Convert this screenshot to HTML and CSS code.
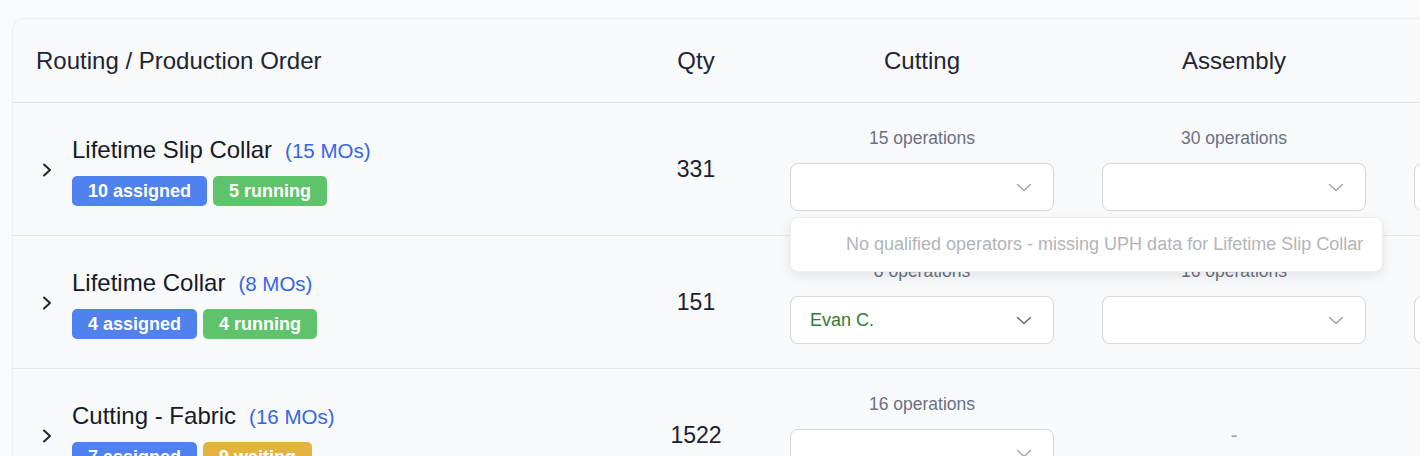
FILE: index.html
```html
<!DOCTYPE html>
<html lang="en">
<head>
<meta charset="utf-8">
<title>Routing</title>
<link rel="stylesheet" href="styles.css">
</head>
<body>
<div class="page">
  <div class="card">
    <div class="row head">
      <div class="cell first"><span class="htext">Routing / Production Order</span></div>
      <div class="cell qty">Qty</div>
      <div class="cell op">Cutting</div>
      <div class="cell op">Assembly</div>
      <div class="cell op">Sewing</div>
    </div>

    <div class="row">
      <div class="cell first">
        <svg class="chev" width="12" height="14" viewBox="0 0 12 14"><path d="M3 1.5l6 5.5-6 5.5" fill="none" stroke="#1f2430" stroke-width="2" stroke-linecap="round" stroke-linejoin="round"/></svg>
        <div class="info">
          <div class="titleline"><span class="title">Lifetime Slip Collar</span><span class="mos">(15 MOs)</span></div>
          <div class="badges"><span class="badge blue">10 assigned</span><span class="badge green">5 running</span></div>
        </div>
      </div>
      <div class="cell qty val">331</div>
      <div class="cell op">
        <div class="ops">15 operations</div>
        <div class="selwrap">
          <div class="select"><span class="selval"></span><svg class="down" width="16" height="9" viewBox="0 0 16 9"><path d="M1.5 1.5l6.5 6 6.5-6" fill="none" stroke="#a3a3a8" stroke-width="1.5" stroke-linecap="round" stroke-linejoin="round"/></svg></div>
          <div class="tip">No qualified operators - missing UPH data for Lifetime Slip Collar</div>
        </div>
      </div>
      <div class="cell op">
        <div class="ops">30 operations</div>
        <div class="select"><span class="selval"></span><svg class="down" width="16" height="9" viewBox="0 0 16 9"><path d="M1.5 1.5l6.5 6 6.5-6" fill="none" stroke="#a3a3a8" stroke-width="1.5" stroke-linecap="round" stroke-linejoin="round"/></svg></div>
      </div>
      <div class="cell op">
        <div class="ops">12 operations</div>
        <div class="select"><span class="selval"></span><svg class="down" width="16" height="9" viewBox="0 0 16 9"><path d="M1.5 1.5l6.5 6 6.5-6" fill="none" stroke="#a3a3a8" stroke-width="1.5" stroke-linecap="round" stroke-linejoin="round"/></svg></div>
      </div>
    </div>

    <div class="row">
      <div class="cell first">
        <svg class="chev" width="12" height="14" viewBox="0 0 12 14"><path d="M3 1.5l6 5.5-6 5.5" fill="none" stroke="#1f2430" stroke-width="2" stroke-linecap="round" stroke-linejoin="round"/></svg>
        <div class="info">
          <div class="titleline"><span class="title">Lifetime Collar</span><span class="mos">(8 MOs)</span></div>
          <div class="badges"><span class="badge blue">4 assigned</span><span class="badge green">4 running</span></div>
        </div>
      </div>
      <div class="cell qty val">151</div>
      <div class="cell op">
        <div class="ops">8 operations</div>
        <div class="select"><span class="selval green-text">Evan C.</span><svg class="down" width="16" height="9" viewBox="0 0 16 9"><path d="M1.5 1.5l6.5 6 6.5-6" fill="none" stroke="#6b6b70" stroke-width="1.5" stroke-linecap="round" stroke-linejoin="round"/></svg></div>
      </div>
      <div class="cell op">
        <div class="ops">16 operations</div>
        <div class="select"><span class="selval"></span><svg class="down" width="16" height="9" viewBox="0 0 16 9"><path d="M1.5 1.5l6.5 6 6.5-6" fill="none" stroke="#a3a3a8" stroke-width="1.5" stroke-linecap="round" stroke-linejoin="round"/></svg></div>
      </div>
      <div class="cell op">
        <div class="ops">8 operations</div>
        <div class="select"><span class="selval"></span><svg class="down" width="16" height="9" viewBox="0 0 16 9"><path d="M1.5 1.5l6.5 6 6.5-6" fill="none" stroke="#a3a3a8" stroke-width="1.5" stroke-linecap="round" stroke-linejoin="round"/></svg></div>
      </div>
    </div>

    <div class="row">
      <div class="cell first">
        <svg class="chev" width="12" height="14" viewBox="0 0 12 14"><path d="M3 1.5l6 5.5-6 5.5" fill="none" stroke="#1f2430" stroke-width="2" stroke-linecap="round" stroke-linejoin="round"/></svg>
        <div class="info">
          <div class="titleline"><span class="title">Cutting - Fabric</span><span class="mos">(16 MOs)</span></div>
          <div class="badges"><span class="badge blue">7 assigned</span><span class="badge yellow">9 waiting</span></div>
        </div>
      </div>
      <div class="cell qty val">1522</div>
      <div class="cell op">
        <div class="ops">16 operations</div>
        <div class="select"><span class="selval"></span><svg class="down" width="16" height="9" viewBox="0 0 16 9"><path d="M1.5 1.5l6.5 6 6.5-6" fill="none" stroke="#a3a3a8" stroke-width="1.5" stroke-linecap="round" stroke-linejoin="round"/></svg></div>
      </div>
      <div class="cell op"><span class="dash">-</span></div>
      <div class="cell op"><span class="dash">-</span></div>
    </div>
  </div>
</div>
</body>
</html>
```
FILE: styles.css
```css
html, body {
  margin: 0;
  padding: 0;
  background: #f9fafb;
  overflow: hidden;
}
body {
  font-family: "Liberation Sans", Arial, sans-serif;
  color: #1b2130;
}
.page {
  padding: 18px 0 0 12px;
  width: 1800px;
}
.card {
  width: 1690px;
  background: #f8f9fb;
  border: 1px solid #eceef1;
  border-right: none;
  border-radius: 12px 0 0 0;
  box-shadow: 0 1px 3px rgba(0, 0, 0, 0.03);
}
.row {
  display: grid;
  grid-template-columns: 633px 120px 312px 312px 312px;
  height: 132px;
  border-bottom: 1px solid #e4e6ea;
}
.row.head {
  height: 83px;
}
.cell {
  display: flex;
  align-items: center;
  min-width: 0;
}
.head .cell {
  font-size: 24px;
  color: #1e2533;
}
.head .first {
  padding-left: 23px;
}
.qty {
  justify-content: center;
  padding-right: 20px;
}
.val {
  font-size: 23px;
  color: #1b2130;
}
.op {
  flex-direction: column;
  justify-content: center;
  padding: 0 24px;
}
.head .op {
  flex-direction: row;
  justify-content: center;
}
.first {
  padding-left: 28px;
}
.chev {
  flex: none;
  margin-right: 19px;
  margin-top: 2px;
}
.info {
  display: flex;
  flex-direction: column;
  gap: 8px;
}
.titleline {
  display: flex;
  align-items: baseline;
  gap: 13px;
  line-height: 34px;
  white-space: nowrap;
}
.title {
  font-size: 24px;
  color: #151b28;
}
.mos {
  font-size: 20.5px;
  color: #3566e6;
}
.badges {
  display: flex;
  gap: 6px;
}
.badge {
  display: inline-block;
  height: 30px;
  line-height: 30px;
  padding: 0 16px;
  border-radius: 5px;
  color: #ffffff;
  font-weight: bold;
  font-size: 18px;
  white-space: nowrap;
}
.badge.blue { background: #4f81ef; }
.badge.green { background: #5fc36b; }
.badge.yellow { background: #e2b33f; }
.ops {
  font-size: 17.5px;
  line-height: 22px;
  color: #6b7180;
  margin-bottom: 14px;
  white-space: nowrap;
}
.selwrap {
  position: relative;
  width: 100%;
}
.select {
  box-sizing: border-box;
  width: 100%;
  height: 48px;
  background: #ffffff;
  border: 1px solid #d3d6db;
  border-radius: 8px;
  display: flex;
  align-items: center;
  justify-content: space-between;
  padding: 0 21px 0 19px;
}
.selval {
  font-size: 18px;
}
.green-text {
  color: #2f7a35;
}
.down {
  flex: none;
}
.tip {
  position: absolute;
  top: 54px;
  left: 0;
  z-index: 5;
  box-sizing: border-box;
  height: 55px;
  display: flex;
  align-items: center;
  padding: 0 19px 0 55px;
  background: #ffffff;
  border: 1px solid #eceef0;
  border-radius: 8px;
  box-shadow: 0 4px 12px rgba(0, 0, 0, 0.09);
  font-size: 18px;
  color: #b2b4b8;
  white-space: nowrap;
}
.dash {
  font-size: 21px;
  color: #9ca3af;
}
```
